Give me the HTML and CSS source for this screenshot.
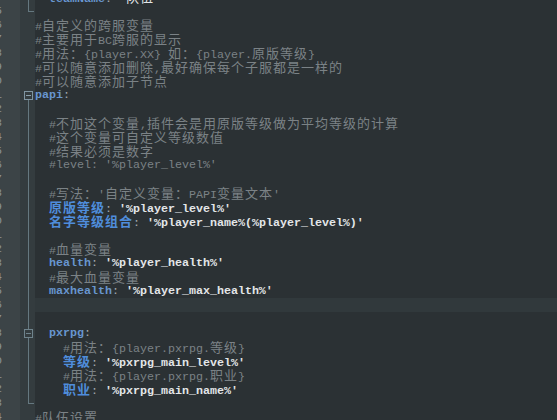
FILE: index.html
```html
<!DOCTYPE html>
<html>
<head>
<meta charset="utf-8">
<link rel="stylesheet" href="styles.css">
</head>
<body>
<div class="editor">
  <div class="row first"><div class="ln"><span>74</span></div><div class="fd mid"></div><div class="code">  <span class="k">teamName</span><span class="p">: </span><span class="s">'<span class="c">队伍</span>'</span></div></div>
  <div class="row"><div class="ln"><span>75</span></div><div class="fd end"></div><div class="code"></div></div>
  <div class="row"><div class="ln"><span>76</span></div><div class="fd"></div><div class="code cm">#<span class="c">自定义的跨服变量</span></div></div>
  <div class="row"><div class="ln"><span>77</span></div><div class="fd"></div><div class="code cm">#<span class="c">主要用于</span>BC<span class="c">跨服的显示</span></div></div>
  <div class="row"><div class="ln"><span>78</span></div><div class="fd"></div><div class="code cm">#<span class="c">用法：</span>{player.XX} <span class="c">如：</span>{player.<span class="c">原版等级</span>}</div></div>
  <div class="row"><div class="ln"><span>79</span></div><div class="fd"></div><div class="code cm">#<span class="c">可以随意添加删除</span>,<span class="c">最好确保每个子服都是一样的</span></div></div>
  <div class="row"><div class="ln"><span>80</span></div><div class="fd"></div><div class="code cm">#<span class="c">可以随意添加子节点</span></div></div>
  <div class="row"><div class="ln"><span>81</span></div><div class="fd open"><span class="box hi"></span></div><div class="code"><span class="k">papi</span><span class="p">:</span></div></div>
  <div class="row"><div class="ln"><span>82</span></div><div class="fd mid"></div><div class="code"></div></div>
  <div class="row"><div class="ln"><span>83</span></div><div class="fd mid"></div><div class="code cm">  #<span class="c">不加这个变量</span>,<span class="c">插件会是用原版等级做为平均等级的计算</span></div></div>
  <div class="row"><div class="ln"><span>84</span></div><div class="fd mid"></div><div class="code cm">  #<span class="c">这个变量可自定义等级数值</span></div></div>
  <div class="row"><div class="ln"><span>85</span></div><div class="fd mid"></div><div class="code cm">  #<span class="c">结果必须是数字</span></div></div>
  <div class="row"><div class="ln"><span>86</span></div><div class="fd mid"></div><div class="code cm">  #level: '%player_level%'</div></div>
  <div class="row"><div class="ln"><span>87</span></div><div class="fd mid"></div><div class="code"></div></div>
  <div class="row"><div class="ln"><span>88</span></div><div class="fd mid"></div><div class="code cm">  #<span class="c">写法：</span>'<span class="c">自定义变量：</span>PAPI<span class="c">变量文本</span>'</div></div>
  <div class="row"><div class="ln"><span>89</span></div><div class="fd mid"></div><div class="code">  <span class="k"><span class="c">原版等级</span></span><span class="p">: </span><span class="s">'%player_level%'</span></div></div>
  <div class="row"><div class="ln"><span>90</span></div><div class="fd mid"></div><div class="code">  <span class="k"><span class="c">名字等级组合</span></span><span class="p">: </span><span class="s">'%player_name%(%player_level%)'</span></div></div>
  <div class="row"><div class="ln"><span>91</span></div><div class="fd mid"></div><div class="code"></div></div>
  <div class="row"><div class="ln"><span>92</span></div><div class="fd mid"></div><div class="code cm">  #<span class="c">血量变量</span></div></div>
  <div class="row"><div class="ln"><span>93</span></div><div class="fd mid"></div><div class="code">  <span class="k">health</span><span class="p">: </span><span class="s">'%player_health%'</span></div></div>
  <div class="row"><div class="ln"><span>94</span></div><div class="fd mid"></div><div class="code cm">  #<span class="c">最大血量变量</span></div></div>
  <div class="row"><div class="ln"><span>95</span></div><div class="fd mid"></div><div class="code">  <span class="k">maxhealth</span><span class="p">: </span><span class="s">'%player_max_health%'</span></div></div>
  <div class="row cur"><div class="ln"><span>96</span></div><div class="fd mid"></div><div class="code"></div></div>
  <div class="row"><div class="ln"><span>97</span></div><div class="fd mid"></div><div class="code"></div></div>
  <div class="row"><div class="ln"><span>98</span></div><div class="fd openmid"><span class="box"></span></div><div class="code">  <span class="k">pxrpg</span><span class="p">:</span></div></div>
  <div class="row"><div class="ln"><span>99</span></div><div class="fd mid"></div><div class="code cm">    #<span class="c">用法：</span>{player.pxrpg.<span class="c">等级</span>}</div></div>
  <div class="row"><div class="ln"><span>100</span></div><div class="fd mid"></div><div class="code">    <span class="k"><span class="c">等级</span></span><span class="p">: </span><span class="s">'%pxrpg_main_level%'</span></div></div>
  <div class="row"><div class="ln"><span>101</span></div><div class="fd mid"></div><div class="code cm">    #<span class="c">用法：</span>{player.pxrpg.<span class="c">职业</span>}</div></div>
  <div class="row"><div class="ln"><span>102</span></div><div class="fd mid"></div><div class="code">    <span class="k"><span class="c">职业</span></span><span class="p">: </span><span class="s">'%pxrpg_main_name%'</span></div></div>
  <div class="row"><div class="ln"><span>103</span></div><div class="fd end"></div><div class="code"></div></div>
  <div class="row"><div class="ln"><span>104</span></div><div class="fd"></div><div class="code cm">#<span class="c">队伍设置</span></div></div>
</div>
</body>
</html>
```
FILE: styles.css
```css
html, body {
  margin: 0;
  padding: 0;
  background: #2b3134;
  overflow: hidden;
}
.editor {
  width: 557px;
  height: 420px;
  overflow: hidden;
  background: #2b3134;
}
.row {
  display: flex;
  height: 14px;
}
.row.first {
  margin-top: -10px;
}
.ln {
  width: 20px;
  flex: none;
  overflow: hidden;
  background: #3c4447;
  font: 11.67px/14px "Liberation Mono", monospace;
  color: #8c9498;
}
.ln span {
  display: block;
  width: 22px;
  margin-left: -20px;
  text-align: right;
}
.fd {
  width: 15px;
  flex: none;
  display: flex;
  align-items: center;
  background-color: #343c3f;
  background-repeat: no-repeat;
}
.fd.mid {
  background-image: linear-gradient(#657880, #657880);
  background-size: 1px 14px;
  background-position: 8px 0;
}
.fd.end {
  background-image: linear-gradient(#657880, #657880), linear-gradient(#657880, #657880);
  background-size: 1px 8px, 6px 1px;
  background-position: 8px 0, 8px 7px;
}
.fd.open {
  background-image: linear-gradient(#657880, #657880);
  background-size: 1px 3px;
  background-position: 8px 11px;
}
.fd.openmid {
  background-image: linear-gradient(#657880, #657880), linear-gradient(#657880, #657880);
  background-size: 1px 3px, 1px 3px;
  background-position: 8px 0, 8px 11px;
}
.box {
  display: block;
  box-sizing: border-box;
  width: 9px;
  height: 9px;
  margin-left: 4px;
  margin-top: 0;
  border: 1px solid #6f838c;
  background: linear-gradient(#6f838c, #6f838c) center / 5px 1px no-repeat;
}
.box.hi {
  border-color: #7f95a2;
  background: linear-gradient(#8aa0ad, #8aa0ad) center / 5px 1px no-repeat;
}
.code {
  flex: 1;
  white-space: pre;
  font: 11.67px/14px "Liberation Mono", monospace;
  color: #a9b1b5;
}
.row.cur .code {
  background: #31393c;
}
.cm {
  color: #7b8286;
}
.k {
  color: #6896cf;
  font-weight: bold;
}
.p {
  color: #a3abaf;
}
.s {
  color: #e3e6e8;
  font-weight: bold;
}
.c {
  font-family: "Noto Sans CJK SC", sans-serif;
  font-size: 13px;
  line-height: 14px;
  letter-spacing: 1px;
  font-weight: normal;
}
.k .c {
  font-weight: bold;
  color: #4f8ddb;
}
```
